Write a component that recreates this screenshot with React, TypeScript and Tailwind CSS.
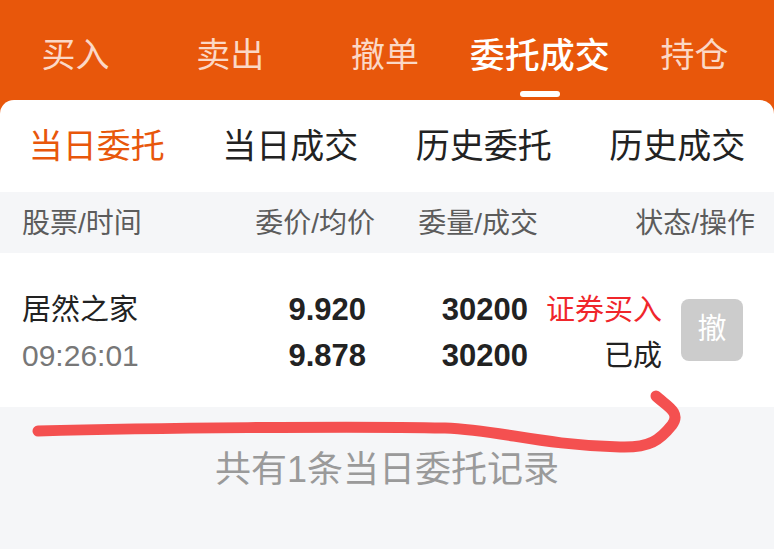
import React from "react";

const FONT = { fontFamily: '"Liberation Sans", "Noto Sans CJK SC", sans-serif' };

export default function App() {
  const top = ["买入", "卖出", "撤单", "委托成交", "持仓"];
  const sub = ["当日委托", "当日成交", "历史委托", "历史成交"];
  return (
    <div className="relative w-[774px] h-[549px] overflow-hidden bg-[#E8570B]" style={FONT}>
      {/* top tabs */}
      <div className="grid grid-cols-5 h-[100px]">
        {top.map((t, i) => (
          <div key={t} className="relative flex items-center justify-center">
            <span
              className={
                i === 3
                  ? "text-[35px] leading-none text-white font-medium -translate-x-[2px] translate-y-[5px]"
                  : "text-[34px] leading-none text-[#FBD8C6] -translate-x-[2px] translate-y-[5px]"
              }
            >
              {t}
            </span>
            {i === 3 && (
              <div className="absolute left-1/2 -translate-x-[22px] top-[91px] w-[40px] h-[6px] rounded-full bg-white" />
            )}
          </div>
        ))}
      </div>

      {/* card */}
      <div className="bg-white rounded-t-[14px] h-[449px] flex flex-col">
        <div className="grid grid-cols-4 h-[92px]">
          {sub.map((t, i) => (
            <div key={t} className="flex items-center justify-center">
              <span
                className={
                  i === 0
                    ? "text-[34px] leading-none text-[#E8570B]"
                    : "text-[34px] leading-none text-[#222]"
                }
              >
                {t}
              </span>
            </div>
          ))}
        </div>

        {/* header row */}
        <div className="h-[61px] bg-[#F5F6F8] flex items-center pl-[22px] pt-[3px] text-[28px] leading-none text-[#5c5c5c]">
          <div className="w-[178px]">股票/时间</div>
          <div className="w-[175px] text-right">委价/均价</div>
          <div className="w-[163px] text-right">委量/成交</div>
          <div className="w-[217px] text-right">状态/操作</div>
        </div>

        {/* data row */}
        <div className="h-[154px] bg-white flex items-center pl-[22px] pt-[6px]">
          <div className="w-[178px] flex flex-col gap-[20px]">
            <div className="text-[29px] leading-[26px] text-[#222]">居然之家</div>
            <div className="text-[30px] leading-[26px] text-[#777]">09:26:01</div>
          </div>
          <div className="w-[166px] flex flex-col gap-[20px] items-end font-bold text-[31px] leading-[26px] text-[#222]">
            <div>9.920</div>
            <div>9.878</div>
          </div>
          <div className="w-[162px] flex flex-col gap-[20px] items-end font-bold text-[31px] leading-[26px] text-[#222]">
            <div>30200</div>
            <div>30200</div>
          </div>
          <div className="w-[134px] flex flex-col gap-[20px] items-end text-[29px] leading-[26px]">
            <div className="text-[#F0262B]">证券买入</div>
            <div className="text-[#222]">已成</div>
          </div>
          <div className="ml-[19px] -mt-[6px] w-[62px] h-[62px] rounded-[8px] bg-[#CCCCCC] flex items-center justify-center text-[29px] text-white">
            撤
          </div>
        </div>

        {/* footer */}
        <div className="flex-1 bg-[#F5F6F8] flex justify-center pt-[45px]">
          <span className="text-[36px] leading-none text-[#9a9a9a]">共有1条当日委托记录</span>
        </div>
      </div>

      {/* hand-drawn red stroke */}
      <svg className="absolute left-0 top-0 pointer-events-none" width="774" height="549" viewBox="0 0 774 549">
        <path
          d="M38,431 C150,428 350,426 445,428 C500,430 540,445 620,447 C650,448 660,440 672,425 C682,412 665,405 656,396"
          fill="none"
          stroke="#F45050"
          strokeWidth="11"
          strokeLinecap="round"
          strokeLinejoin="round"
        />
      </svg>
    </div>
  );
}
